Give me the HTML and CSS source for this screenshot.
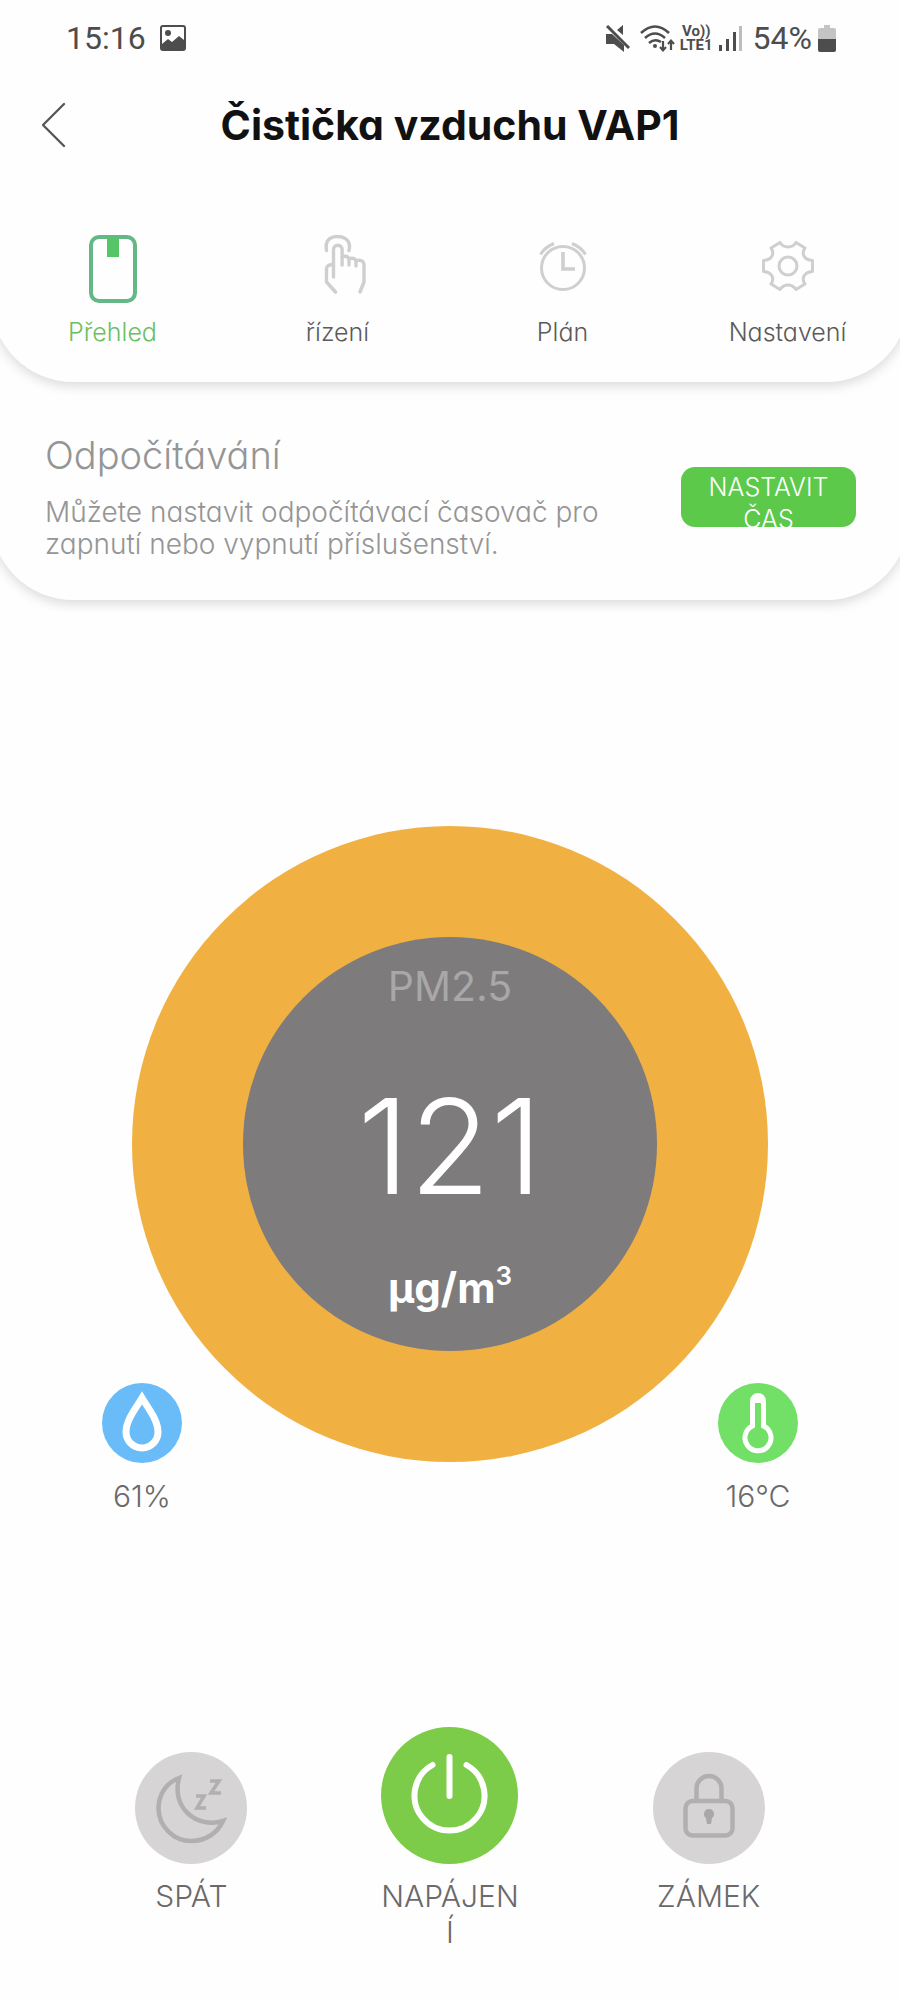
FILE: index.html
```html
<!DOCTYPE html>
<html lang="cs">
<head>
<meta charset="utf-8">
<meta name="viewport" content="width=device-width, initial-scale=1">
<title>Čistička vzduchu VAP1</title>
<link rel="stylesheet" href="styles.css">
</head>
<body>
<div class="app">
  <div class="status">
    <div class="status-group">
      <span>15:16</span>
      <svg class="photo" width="26" height="26" viewBox="0 0 26 26"><path fill="currentColor" fill-rule="evenodd" d="M3 0h20a3 3 0 0 1 3 3v20a3 3 0 0 1-3 3H3a3 3 0 0 1-3-3V3a3 3 0 0 1 3-3zM2 3v16l6-5 4 3 7-6 5 4V3a1 1 0 0 0-1-1H3a1 1 0 0 0-1 1z"/><circle cx="8" cy="8" r="3" fill="currentColor"/></svg>
    </div>
    <div class="status-group status-right">
      <svg width="24" height="27" viewBox="0 0 24 27"><path fill="currentColor" d="M0 9h6l12 11v7L8 19H0zM17 0v10l-6-5z"/><path d="M1 1l22 22" stroke="currentColor" stroke-width="3"/></svg>
      <svg class="wifi" width="36" height="27" viewBox="0 0 36 27" fill="none" stroke="currentColor" stroke-width="2.6"><path d="M1 8Q15-5 29 8M5 13q10-9 20 0M9 18q6-5 12-1"/><circle cx="15" cy="21" r="2" fill="currentColor" stroke="none"/><path stroke-width="2.200" d="M23 16v9M31 25v-9"/><path stroke-width="2" d="M20 22l3 3.500 3-3.500M28 19l3-3.500 3 3.500"/></svg>
      <span class="volte"><span>Vo))</span><span>LTE1</span></span>
      <svg class="signal" width="24" height="26" viewBox="0 0 24 26"><path fill="currentColor" d="M0 20h3v6H0zM7 14h3v12H7zM14 7h3v19h-3z"/><path fill="#bdbdbd" d="M20 1h3v25h-3z"/></svg>
      <span>54%</span>
      <svg class="battery" width="18" height="27" viewBox="0 0 18 27"><path fill="#c4c4c4" d="M6 0h6v3h4a2 2 0 0 1 2 2v9H0V5a2 2 0 0 1 2-2h4z"/><path fill="currentColor" d="M0 14h18v11a2 2 0 0 1-2 2H2a2 2 0 0 1-2-2z"/></svg>
    </div>
  </div>

  <header class="card card-top">
    <div class="titlebar">
      <button class="back" type="button" aria-label="Zpět"><svg width="24" height="46" viewBox="0 0 24 46" fill="none" stroke="currentColor" stroke-width="2.300" stroke-linecap="round" stroke-linejoin="round"><path d="M22 2L1 23l21 21"/></svg></button>
      <h1>Čistička vzduchu VAP1</h1>
    </div>
    <nav class="tabs">
      <a class="tab tab-active" href="#prehled" aria-current="page">
        <span class="tab-icon"><svg width="48" height="68" viewBox="0 0 48 68"><rect x="2" y="2" width="44" height="64" rx="8" fill="none" stroke="#63b886" stroke-width="4"/><path fill="#55c568" d="M18 2h12v20H18z"/></svg></span>
        <span>Přehled</span>
      </a>
      <a class="tab" href="#rizeni">
        <span class="tab-icon tab-icon-high"><svg width="56" height="59" viewBox="-14 0 56 59" fill="none" stroke="#cfcfcf" stroke-width="3.400" stroke-linecap="round" stroke-linejoin="round"><path d="M2.500 15.500C0 1 12 1.500 14 1.500s14 1 11 14"/><path d="M9.500 42V14.500a4.300 4.300 0 0 1 8.600 0V30M18 22c4-2 7 0 7 3v5M25 24c4-2 7 0 7 3v4M32 26c4-2 8 0 8 4v17l-4 10M9.500 30c-4-1-7 1-7 4v13l9 10"/></svg></span>
        <span>řízení</span>
      </a>
      <a class="tab" href="#plan">
        <span class="tab-icon tab-icon-small"><svg width="48" height="49" viewBox="0 0 48 49" fill="none" stroke="#cfcfcf" stroke-width="3"><circle cx="24" cy="26" r="21.500"/><path d="M24 10v17h12" stroke-width="3.600"/><path d="M1.500 12.500Q6 5 15 1.500M46.500 12.500Q42 5 33 1.500"/></svg></span>
        <span>Plán</span>
      </a>
      <a class="tab" href="#nastaveni">
        <span class="tab-icon tab-icon-small"><svg width="52" height="50" viewBox="0 0 52 50" fill="none" stroke="#cfcfcf" stroke-width="3" stroke-linejoin="round"><circle cx="26" cy="25" r="9"/><path d="M18 1.500Q21 6 26 6t8-4.500L43 7Q40 11 42 15t8.500 4.500v11Q44 31 42 35t1 8l-9 5.500Q31 44 26 44t-8 4.500L9 43q3-4 1-8t-8.500-4.500v-11Q8 19 10 15T9 7z"/></svg></span>
        <span>Nastavení</span>
      </a>
    </nav>
  </header>

  <section class="card countdown">
    <div class="countdown-text">
      <h2>Odpočítávání</h2>
      <p>Můžete nastavit odpočítávací časovač pro zapnutí nebo vypnutí příslušenství.</p>
    </div>
    <button class="set-time" type="button">NASTAVIT ČAS</button>
  </section>

  <main class="monitor">
    <div class="dial">
      <div class="dial-core">
        <span class="dial-name">PM2.5</span>
        <span class="dial-value">121</span>
        <span class="dial-unit">µg/m<sup>3</sup></span>
      </div>
    </div>
    <div class="readings">
      <div class="reading">
        <svg width="80" height="80" viewBox="0 0 80 80"><circle cx="40" cy="40" r="40" fill="#69bcf8"/><path d="M40 15C34 25 24 37 24 49a16 16 0 0 0 32 0C56 37 46 25 40 15z" fill="none" stroke="#fff" stroke-width="7"/></svg>
        <span>61%</span>
      </div>
      <div class="reading">
        <svg width="80" height="80" viewBox="0 0 80 80"><circle cx="40" cy="40" r="40" fill="#72e067"/><path d="M34.500 43V18a5.500 5.500 0 0 1 11 0v25a13 13 0 1 1-11 0z" fill="none" stroke="#fff" stroke-width="5"/><path d="M34 20a6 8 0 0 1 12 0z" fill="#fff"/></svg>
        <span>16℃</span>
      </div>
    </div>
  </main>

  <footer class="controls">
    <button class="control" type="button">
      <span class="control-icon"><svg width="112" height="112" viewBox="0 0 112 112"><circle cx="56" cy="56" r="56" fill="#d6d4d5"/><g fill="none" stroke="#b1afb0" stroke-width="4.500"><path d="M44 26C31 31 23.500 43 23.500 56a33 33 0 0 0 33 33c14 0 26-8 31.500-20C62 77 36 56 44 26z"/><path stroke-width="3.500" d="M75 29h9L76 41h10M61 44h8L62 56h9"/></g></svg></span>
      <span class="control-label">SPÁT</span>
    </button>
    <button class="control" type="button" aria-pressed="true">
      <span class="control-icon"><svg width="137" height="137" viewBox="0 0 137 137"><circle cx="68.500" cy="68.500" r="68.500" fill="#7ccb49"/><path d="M51.500 38a35 35 0 1 0 34 0M68.500 30v39" fill="none" stroke="#fff" stroke-width="6" stroke-linecap="round"/></svg></span>
      <span class="control-label">NAPÁJENÍ</span>
    </button>
    <button class="control" type="button">
      <span class="control-icon"><svg width="112" height="112" viewBox="0 0 112 112"><circle cx="56" cy="56" r="56" fill="#d6d4d5"/><g fill="none" stroke="#b1afb0" stroke-width="4.500"><rect x="32.500" y="49" width="47" height="34.500" rx="7"/><path d="M43.500 48V36.500a12.500 12.500 0 0 1 25 0V48"/></g><path fill="#a9a7a8" d="M56 57a5 5 0 0 1 3 9l-1 6h-4l-1-6a5 5 0 0 1 3-9z"/></svg></span>
      <span class="control-label">ZÁMEK</span>
    </button>
  </footer>
</div>
</body>
</html>
```
FILE: styles.css
```css
* { box-sizing: border-box; }

body {
  margin: 0;
  background: #fefefe;
  color: #6b696a;
  font-family: "Century Gothic", Inter, Roboto, "Noto Sans", sans-serif;
  font-feature-settings: "cv11";
  font-weight: 300;
}

button {
  border: 0;
  padding: 0;
  background: none;
  color: inherit;
  font: inherit;
  font-feature-settings: inherit;
  cursor: pointer;
}

svg { display: block; flex: none; }

.app { overflow-x: hidden; min-height: 100vh; }

/* Status bar */
.status {
  display: flex;
  justify-content: space-between;
  align-items: center;
  height: 76px;
  padding: 0 64px 0 66px;
  color: #4d4d4d;
  font-family: Roboto, sans-serif;
  font-size: 32px;
  line-height: 40px;
  font-weight: 400;
}
.status-group { display: flex; align-items: center; }
.photo { margin-left: 14px; }
.wifi { margin-left: 10px; }
.volte {
  display: flex;
  flex-direction: column;
  align-items: center;
  margin-left: 4px;
  font-size: 15px;
  line-height: 14px;
  font-weight: 700;
}
.signal { margin-left: 6px; }
.signal + span { margin-left: 10px; }
.battery { margin-left: 6px; }

/* Sheets with rounded lower corners, slightly wider than the window.
   The clip keeps the shadow on the lower side only. */
.card {
  position: relative;
  margin: 0 -9px;
  background: #fefefe;
  border-radius: 0 0 82px 82px;
  box-shadow: 0 4px 12px rgba(0, 0, 0, 0.14);
  clip-path: inset(0 0 -30px 0);
}
.card-top { z-index: 2; padding: 0 9px 34px; }
.countdown { z-index: 1; }

.titlebar {
  display: grid;
  grid-template-columns: 66px 1fr 66px;
  align-items: center;
  height: 98px;
}
.back { justify-self: end; color: #555; }
h1 {
  margin: 0;
  color: #111;
  font-size: 41px;
  line-height: 48px;
  font-weight: 700;
  text-align: center;
}

.tabs {
  display: grid;
  grid-template-columns: repeat(4, 1fr);
  padding-top: 61px;
}
.tab {
  display: flex;
  flex-direction: column;
  align-items: center;
  gap: 13px;
  color: #5a5a5a;
  font-size: 25px;
  line-height: 32px;
  text-decoration: none;
}
.tab-active { color: #6abf60; }
.tab-icon { display: flex; align-items: center; height: 68px; }
.tab-icon-high { align-items: flex-start; }
.tab-icon-small { padding-bottom: 6px; }

/* Countdown */
.countdown {
  display: flex;
  justify-content: space-between;
  align-items: center;
  gap: 40px;
  padding: 51px 53px 40px 54px;
}
.countdown-text { flex: 1; color: #959595; }
h2 {
  margin: 0 0 19px;
  font-size: 38px;
  line-height: 44px;
  font-weight: 300;
}
p { margin: 0; font-size: 28px; line-height: 32px; }
.set-time {
  display: flex;
  align-items: flex-start;
  justify-content: center;
  flex: none;
  width: 175px;
  height: 60px;
  padding: 4px 20px 0;
  overflow: hidden;
  border-radius: 14px;
  background: #5cc94b;
  color: #fff;
  font-size: 25px;
  line-height: 32px;
}

/* Air quality dial, with the readings laid over its lower corners */
.monitor { display: grid; min-height: 688px; margin-top: 226px; }
.dial, .readings { grid-area: 1 / 1; }
.dial {
  display: grid;
  place-items: center;
  place-self: start center;
  width: 636px;
  max-width: 90%;
  aspect-ratio: 1;
  border-radius: 50%;
  background: #f1b142;
}
.dial-core {
  display: flex;
  flex-direction: column;
  align-items: center;
  width: 65%;
  aspect-ratio: 1;
  padding-top: 25px;
  border-radius: 50%;
  background: #7d7b7c;
  color: #fff;
}
.dial-name { color: #a9a7a8; font-size: 41px; line-height: 48px; font-weight: 400; }
.dial-value { margin-top: 56px; font-size: 132px; line-height: 160px; }
.dial-unit { margin-top: 38px; font-size: 42px; line-height: 48px; font-weight: 700; }
.dial-unit sup {
  font-size: 26px;
  line-height: 0;
  font-weight: 600;
  vertical-align: 18px;
}

.readings {
  display: flex;
  justify-content: space-between;
  align-self: end;
  padding: 0 102px;
}
.reading {
  display: flex;
  flex-direction: column;
  align-items: center;
  gap: 15px;
  width: 80px;
  font-size: 30px;
  line-height: 36px;
}

/* Device controls */
.controls {
  display: grid;
  grid-template-columns: repeat(3, 1fr);
  align-items: start;
  justify-items: center;
  margin-top: 213px;
  padding: 0 62px 46px;
}
.control {
  display: flex;
  flex-direction: column;
  align-items: center;
  gap: 14px;
  width: 142px;
  font-size: 30px;
  line-height: 36px;
}
.control-icon { display: flex; align-items: flex-end; height: 137px; }
.control-label { max-width: 100%; overflow-wrap: anywhere; }
```
